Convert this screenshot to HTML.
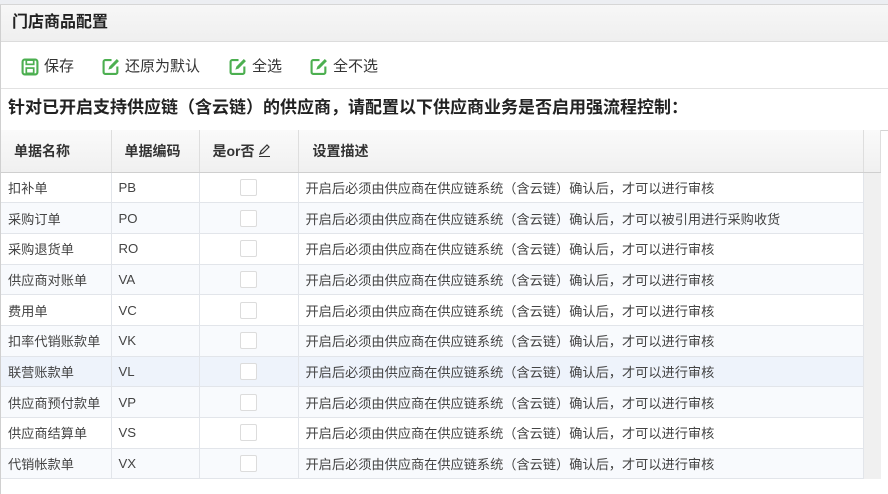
<!DOCTYPE html>
<html><head><meta charset="utf-8"><style>
*{margin:0;padding:0;box-sizing:border-box}
body{width:888px;height:494px;overflow:hidden;background:#fff;font-family:"Liberation Sans","Noto Sans CJK SC",sans-serif;color:#333;position:relative}
.top{position:absolute;left:0;top:0;width:888px;height:5px;background:#eceef2;border-bottom:1px solid #d6d6d6}
.panel{position:absolute;left:0;top:5px;width:888px;height:489px;border-left:1px solid #d0d0d0}
.title{height:37px;background:linear-gradient(#f7f7f7,#efefef);border-bottom:1px solid #dcdcdc;font-size:16px;font-weight:bold;padding-left:11px;line-height:36px;color:#222}
.tb{height:47px;border-bottom:1px solid #e2e2e2;position:relative;font-size:15px;color:#333}
.tb span{position:absolute;top:16px;display:flex;align-items:center;line-height:18px}
.tb svg{margin-right:5px}
.h{font-size:17px;font-weight:bold;color:#222;padding-left:7px;line-height:38px;height:42px;border-bottom:1px solid #d4d4d4}
table{border-collapse:collapse;position:absolute;left:0;top:125px;width:880px;font-size:13.2px}
th{height:42px;background:linear-gradient(#fafafa,#f0f0f0);text-align:left;font-weight:bold;font-size:14px;border-right:1px solid #dedede;border-bottom:1px solid #cfcfcf;padding-left:13px;color:#333}
td{height:30.7px;border-right:1px solid #e2e5ea;border-bottom:1px solid #e2e5ea;padding-left:7px;color:#444}
tr.a td{background:#f8fafd}
tr.s td{background:#eef3fb}
td.cb{text-align:center;padding:0}
.box{display:inline-block;width:17px;height:17px;border:1px solid #dcdcdc;border-radius:2px;background:#fff;vertical-align:middle}
td.sc{background:#f0f0f0!important;border:none;padding:0;width:17px}
</style></head><body>
<div class="top"></div>
<div class="panel">
<div class="title">门店商品配置</div>
<div class="tb">
<span style="left:20px"><svg width="18" height="18" viewBox="0 0 17 17"><rect x="1.5" y="1.5" width="14" height="14" rx="2" fill="none" stroke="#4caf50" stroke-width="2"/><rect x="5" y="2" width="7" height="4" fill="none" stroke="#4caf50" stroke-width="1.6"/><rect x="5" y="9.5" width="7" height="5" fill="none" stroke="#4caf50" stroke-width="1.6"/></svg>保存</span>
<span style="left:101px"><svg width="18" height="18" viewBox="0 0 17 17"><path d="M9 2H3a1.5 1.5 0 0 0-1.5 1.5v10A1.5 1.5 0 0 0 3 15h10a1.5 1.5 0 0 0 1.5-1.5V8" fill="none" stroke="#4caf50" stroke-width="2"/><path d="M6 11l1-3 7-7 2 2-7 7z" fill="#4caf50"/></svg>还原为默认</span>
<span style="left:228px"><svg width="18" height="18" viewBox="0 0 17 17"><path d="M9 2H3a1.5 1.5 0 0 0-1.5 1.5v10A1.5 1.5 0 0 0 3 15h10a1.5 1.5 0 0 0 1.5-1.5V8" fill="none" stroke="#4caf50" stroke-width="2"/><path d="M6 11l1-3 7-7 2 2-7 7z" fill="#4caf50"/></svg>全选</span>
<span style="left:309px"><svg width="18" height="18" viewBox="0 0 17 17"><path d="M9 2H3a1.5 1.5 0 0 0-1.5 1.5v10A1.5 1.5 0 0 0 3 15h10a1.5 1.5 0 0 0 1.5-1.5V8" fill="none" stroke="#4caf50" stroke-width="2"/><path d="M6 11l1-3 7-7 2 2-7 7z" fill="#4caf50"/></svg>全不选</span>
</div>
<div class="h">针对已开启支持供应链（含云链）的供应商，请配置以下供应商业务是否启用强流程控制：</div>
<table>
<tr><th style="width:110px">单据名称</th><th style="width:88px">单据编码</th><th style="width:99px">是or否 <svg width="13" height="13" viewBox="0 0 13 13" style="vertical-align:-1px"><path d="M2 10l1-3 6-6 2 2-6 6z" fill="none" stroke="#333" stroke-width="1.2"/><path d="M1 12.5h11" stroke="#333"/></svg></th><th style="padding-left:14px">设置描述</th><th style="width:17px;padding:0"></th></tr>
<tr><td>扣补单</td><td>PB</td><td class="cb"><span class="box"></span></td><td>开启后必须由供应商在供应链系统（含云链）确认后，才可以进行审核</td><td class="sc"></td></tr>
<tr class="a"><td>采购订单</td><td>PO</td><td class="cb"><span class="box"></span></td><td>开启后必须由供应商在供应链系统（含云链）确认后，才可以被引用进行采购收货</td><td class="sc"></td></tr>
<tr><td>采购退货单</td><td>RO</td><td class="cb"><span class="box"></span></td><td>开启后必须由供应商在供应链系统（含云链）确认后，才可以进行审核</td><td class="sc"></td></tr>
<tr class="a"><td>供应商对账单</td><td>VA</td><td class="cb"><span class="box"></span></td><td>开启后必须由供应商在供应链系统（含云链）确认后，才可以进行审核</td><td class="sc"></td></tr>
<tr><td>费用单</td><td>VC</td><td class="cb"><span class="box"></span></td><td>开启后必须由供应商在供应链系统（含云链）确认后，才可以进行审核</td><td class="sc"></td></tr>
<tr class="a"><td>扣率代销账款单</td><td>VK</td><td class="cb"><span class="box"></span></td><td>开启后必须由供应商在供应链系统（含云链）确认后，才可以进行审核</td><td class="sc"></td></tr>
<tr class="s"><td>联营账款单</td><td>VL</td><td class="cb"><span class="box"></span></td><td>开启后必须由供应商在供应链系统（含云链）确认后，才可以进行审核</td><td class="sc"></td></tr>
<tr class="a"><td>供应商预付款单</td><td>VP</td><td class="cb"><span class="box"></span></td><td>开启后必须由供应商在供应链系统（含云链）确认后，才可以进行审核</td><td class="sc"></td></tr>
<tr><td>供应商结算单</td><td>VS</td><td class="cb"><span class="box"></span></td><td>开启后必须由供应商在供应链系统（含云链）确认后，才可以进行审核</td><td class="sc"></td></tr>
<tr class="a"><td>代销帐款单</td><td>VX</td><td class="cb"><span class="box"></span></td><td>开启后必须由供应商在供应链系统（含云链）确认后，才可以进行审核</td><td class="sc"></td></tr>
</table>
</div>
</body></html>
